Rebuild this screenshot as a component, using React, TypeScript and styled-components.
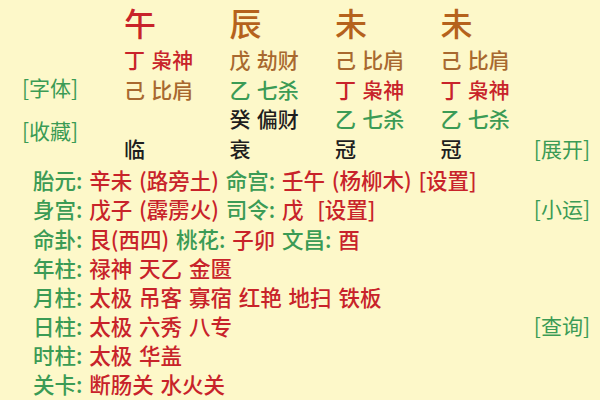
import React from 'react';
import styled, { createGlobalStyle } from 'styled-components';

type Tone = 'red' | 'brown' | 'green' | 'black' | 'orange';

const colors: Record<Tone, string> = {
  red: '#c8232a',
  brown: '#a8692f',
  green: '#3b9b55',
  black: '#1e1e1e',
  orange: '#b5621c',
};

type Cell = { text: string; tone: Tone } | null;

const pillars: { branch: string; branchTone: Tone; cells: Cell[]; stage: string }[] = [
  {
    branch: '午',
    branchTone: 'red',
    cells: [{ text: '丁 枭神', tone: 'red' }, { text: '己 比肩', tone: 'brown' }, null],
    stage: '临',
  },
  {
    branch: '辰',
    branchTone: 'orange',
    cells: [{ text: '戊 劫财', tone: 'brown' }, { text: '乙 七杀', tone: 'green' }, { text: '癸 偏财', tone: 'black' }],
    stage: '衰',
  },
  {
    branch: '未',
    branchTone: 'orange',
    cells: [{ text: '己 比肩', tone: 'brown' }, { text: '丁 枭神', tone: 'red' }, { text: '乙 七杀', tone: 'green' }],
    stage: '冠',
  },
  {
    branch: '未',
    branchTone: 'orange',
    cells: [{ text: '己 比肩', tone: 'brown' }, { text: '丁 枭神', tone: 'red' }, { text: '乙 七杀', tone: 'green' }],
    stage: '冠',
  },
];

type Part = { text: string; tone: Tone };

const infoRows: { parts: Part[]; link?: string }[] = [
  {
    parts: [
      { text: '胎元: ', tone: 'green' },
      { text: '辛未 (路旁土) ', tone: 'red' },
      { text: '命宫: ', tone: 'green' },
      { text: '壬午 (杨柳木) [设置]', tone: 'red' },
    ],
  },
  {
    parts: [
      { text: '身宫: ', tone: 'green' },
      { text: '戊子 (霹雳火) ', tone: 'red' },
      { text: '司令: ', tone: 'green' },
      { text: '戊  [设置]', tone: 'red' },
    ],
    link: '[小运]',
  },
  {
    parts: [
      { text: '命卦: ', tone: 'green' },
      { text: '艮(西四) ', tone: 'red' },
      { text: '桃花: ', tone: 'green' },
      { text: '子卯 ', tone: 'red' },
      { text: '文昌: ', tone: 'green' },
      { text: '酉', tone: 'red' },
    ],
  },
  { parts: [{ text: '年柱: ', tone: 'green' }, { text: '禄神 天乙 金匮', tone: 'red' }] },
  { parts: [{ text: '月柱: ', tone: 'green' }, { text: '太极 吊客 寡宿 红艳 地扫 铁板', tone: 'red' }] },
  { parts: [{ text: '日柱: ', tone: 'green' }, { text: '太极 六秀 八专', tone: 'red' }], link: '[查询]' },
  { parts: [{ text: '时柱: ', tone: 'green' }, { text: '太极 华盖', tone: 'red' }] },
  { parts: [{ text: '关卡: ', tone: 'green' }, { text: '断肠关 水火关', tone: 'red' }] },
];

const App = () => {
  return (
    <>
      <GlobalStyle />
      <Page>
        <Top>
          <SideLinks>
            <LinkText>[字体]</LinkText>
            <LinkText>[收藏]</LinkText>
          </SideLinks>
          <Pillars>
            {pillars.map((p, i) => (
              <Column key={i}>
                <Branch tone={p.branchTone}>{p.branch}</Branch>
                {p.cells.map((c, j) => (
                  <CellText key={j} tone={c ? c.tone : 'black'}>
                    {c ? c.text : '\u00a0'}
                  </CellText>
                ))}
                <CellText tone="black">{p.stage}</CellText>
              </Column>
            ))}
          </Pillars>
          <RightCol>
            <LinkText>[展开]</LinkText>
          </RightCol>
        </Top>
        <Info>
          {infoRows.map((row, i) => (
            <InfoRow key={i}>
              <span>
                {row.parts.map((part, j) => (
                  <Part key={j} tone={part.tone}>
                    {part.text}
                  </Part>
                ))}
              </span>
              {row.link && <LinkText>{row.link}</LinkText>}
            </InfoRow>
          ))}
        </Info>
      </Page>
    </>
  );
};

export default App;

const GlobalStyle = createGlobalStyle`
  html, body {
    margin: 0;
    padding: 0;
    background: #fdf8c9;
  }
  body {
    font-family: "Noto Sans CJK SC", "Noto Sans", sans-serif;
  }
`;

const Page = styled.div`
  width: 600px;
  height: 400px;
  overflow: hidden;
  background: #fdf8c9;
`;

const Top = styled.div`
  display: flex;
`;

const SideLinks = styled.div`
  width: 124px;
  flex-shrink: 0;
  box-sizing: border-box;
  padding: 73px 0 0 22px;
  display: flex;
  flex-direction: column;
  gap: 13px;
`;

const LinkText = styled.span`
  color: ${colors.green};
  font-size: 21px;
  font-weight: 400;
  line-height: 29.5px;
  word-spacing: 0;
  white-space: nowrap;
`;

const Pillars = styled.div`
  display: grid;
  grid-template-columns: repeat(3, 105.5px) auto;
`;

const Column = styled.div`
  display: flex;
  flex-direction: column;
`;

const Branch = styled.div<{ tone: Tone }>`
  color: ${(p) => colors[p.tone]};
  font-size: 32px;
  font-weight: 500;
  line-height: 45px;
  height: 45px;
`;

const CellText = styled.div<{ tone: Tone }>`
  color: ${(p) => colors[p.tone]};
  font-size: 21px;
  font-weight: 500;
  line-height: 29.5px;
  word-spacing: 1.5px;
  white-space: nowrap;
`;

const RightCol = styled.div`
  flex: 1;
  display: flex;
  align-items: flex-end;
  justify-content: flex-end;
  padding-right: 10px;
`;

const Info = styled.div`
  padding: 2px 10px 0 33px;
`;

const InfoRow = styled.div`
  display: flex;
  justify-content: space-between;
  font-size: 21.5px;
  font-weight: 500;
  line-height: 29px;
  word-spacing: 2px;
  white-space: pre;
`;

const Part = styled.span<{ tone: Tone }>`
  color: ${(p) => colors[p.tone]};
`;
